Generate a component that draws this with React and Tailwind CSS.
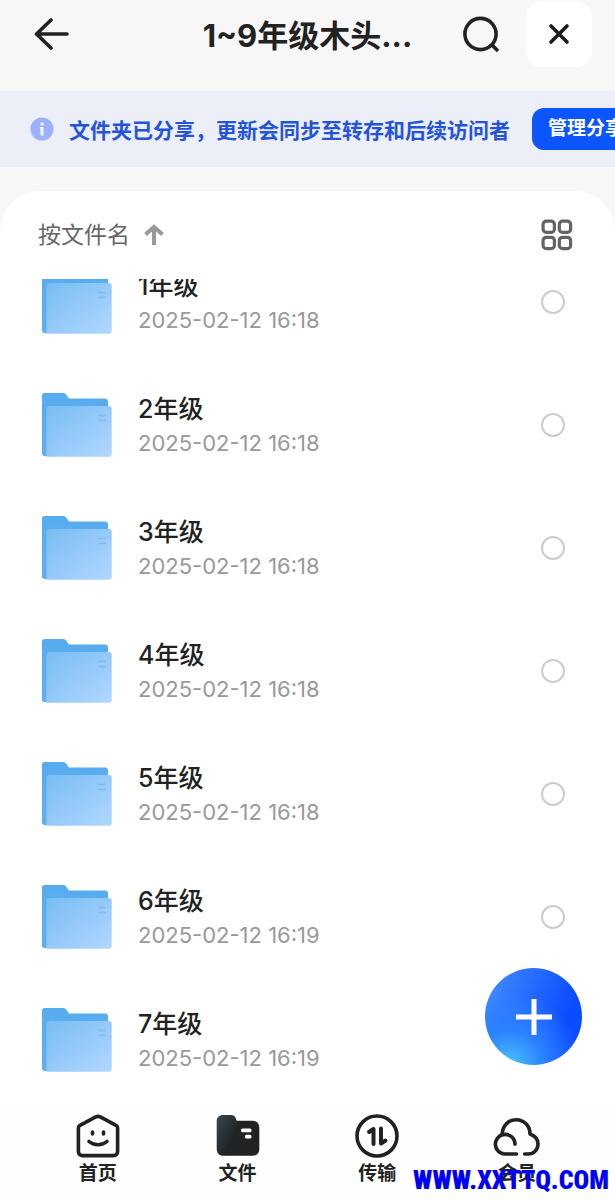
import { useState } from 'react'

const folders = [
  { name: '1年级', time: '2025-02-12 16:18' },
  { name: '2年级', time: '2025-02-12 16:18' },
  { name: '3年级', time: '2025-02-12 16:18' },
  { name: '4年级', time: '2025-02-12 16:18' },
  { name: '5年级', time: '2025-02-12 16:18' },
  { name: '6年级', time: '2025-02-12 16:19' },
  { name: '7年级', time: '2025-02-12 16:19' },
]

const tabs = [
  { label: '首页', Icon: HomeIcon },
  { label: '文件', Icon: FilesIcon },
  { label: '传输', Icon: TransferIcon },
  { label: '会员', Icon: CloudIcon },
]

function BackIcon() {
  return (
    <svg width="36" height="32" viewBox="0 0 36 32" fill="none" stroke="#222" strokeWidth="3.6" strokeLinecap="round" strokeLinejoin="round">
      <path d="M17 2 2.500 16 17 30M3 16h30" />
    </svg>
  )
}

function SearchIcon() {
  return (
    <svg width="38" height="38" viewBox="0 0 38 38" fill="none" stroke="#222" strokeWidth="3.6">
      <circle cx="18.500" cy="19" r="15.600" />
      <path d="m29.500 29.500 6.500 6.500" />
    </svg>
  )
}

function CloseIcon() {
  return (
    <svg width="22" height="22" viewBox="0 0 22 22" fill="none" stroke="#1c1c1c" strokeWidth="3.600" strokeLinecap="round">
      <path d="m3 3 16 16M19 3 3 19" />
    </svg>
  )
}

function InfoIcon() {
  return (
    <svg className="shrink-0" width="24" height="24" viewBox="0 0 24 24">
      <circle cx="12" cy="12" r="11.500" fill="#9bb1fb" />
      <circle cx="12" cy="7" r="1.700" fill="#f3f5ff" />
      <path d="M9.800 10h3.700v8.500h-3v-7h-.700Z" fill="#f3f5ff" />
    </svg>
  )
}

function SortUpIcon() {
  return (
    <svg width="20" height="22" viewBox="0 0 20 22" fill="none" stroke="#999" strokeWidth="4">
      <path d="M10 21V3M1.500 10.500 10 3l8.500 7.500" />
    </svg>
  )
}

function GridIcon() {
  return (
    <svg width="32" height="32" viewBox="0 0 32 32" fill="none" stroke="#636363" strokeWidth="3.200">
      <rect x="2.100" y="2.100" width="11.300" height="11.300" rx="3.200" />
      <rect x="18.300" y="2.100" width="11.300" height="11.300" rx="3.200" />
      <rect x="2.100" y="18.300" width="11.300" height="11.300" rx="3.200" />
      <rect x="18.300" y="18.300" width="11.300" height="11.300" rx="3.200" />
    </svg>
  )
}

function FolderIcon() {
  return (
    <svg className="shrink-0" width="70" height="65" viewBox="0 0 70 65">
      <defs>
        <linearGradient id="folder-front" x1="0" y1="0" x2="1" y2="1">
          <stop offset="0" stopColor="#78bdf2" />
          <stop offset="0.550" stopColor="#98cbfa" />
          <stop offset="1" stopColor="#b1d7fe" />
        </linearGradient>
        <linearGradient id="folder-back" x1="0" y1="0" x2="0" y2="1">
          <stop offset="0" stopColor="#56acf0" />
          <stop offset="1" stopColor="#61b0ec" />
        </linearGradient>
      </defs>
      <path d="M2.500 1H21c1.600 0 2.500.5 3.300 1.700L27 6.500h36c2 0 3 1 3 3V64H2.500C1 64 0 63 0 61.500v-58C0 2 1 1 2.500 1Z" fill="url(#folder-back)" />
      <path d="M7.500 14H67c1.700 0 2.700 1 2.700 2.700V62c0 1.700-1 2.700-2.700 2.700H4.500V17c0-2 1-3 3-3Z" fill="url(#folder-front)" />
      <path d="M56 23.500h8M56 28.500h8" stroke="#84baf0" strokeWidth="1.600" />
    </svg>
  )
}

function HomeIcon() {
  return (
    <svg width="44" height="44" viewBox="0 0 44 44" fill="none" stroke="#222" strokeWidth="3.600" strokeLinecap="round" strokeLinejoin="round">
      <path d="M19.700 2.900 4 11.300c-1 .6-1.600 1.500-1.600 2.700v23.500c0 2.400 1.700 4.100 4.100 4.100h31c2.400 0 4.100-1.700 4.100-4.100V14c0-1.200-.6-2.100-1.600-2.700L24.300 2.900c-1.600-.8-3-.8-4.600 0Z" />
      <path d="M16.500 18v2M27.500 18v2" />
      <path d="M13 27.500c5 4.300 13 4.300 18 0" />
    </svg>
  )
}

function FilesIcon() {
  return (
    <svg width="44" height="44" viewBox="0 0 44 44">
      <defs>
        <linearGradient id="tab-folder" x1="0" y1="0.200" x2="1" y2="0.700">
          <stop offset="0" stopColor="#37424a" />
          <stop offset="0.450" stopColor="#202325" />
          <stop offset="1" stopColor="#222" />
        </linearGradient>
      </defs>
      <path d="M7 1h8c2.500 0 3.800 1 4.700 3.300l1 2.500h16c4 0 6.600 2.700 6.600 6.600v21.500c0 4.200-2.600 6.800-6.800 6.800h-29C3.300 41.700.7 39.100.7 34.900V7.500C.7 3.500 3 1 7 1Z" fill="url(#tab-folder)" />
      <rect x="25" y="14.500" width="10.500" height="3.800" rx="1.500" fill="#fff" />
      <rect x="29" y="20.700" width="6.500" height="3.800" rx="1.500" fill="#fff" />
    </svg>
  )
}

function TransferIcon() {
  return (
    <svg width="44" height="44" viewBox="0 0 44 44" fill="none" stroke="#222" strokeWidth="3.600" strokeLinecap="round" strokeLinejoin="round">
      <circle cx="22" cy="22" r="20" />
      <path d="M18.500 30V15l-4.500 3M26 14.500v15l4.500-3" strokeWidth="4" />
    </svg>
  )
}

function CloudIcon() {
  return (
    <svg width="48" height="44" viewBox="0 0 48 44" fill="none" stroke="#222" strokeWidth="3.600" strokeLinecap="round" strokeLinejoin="round">
      <path d="M23.500 40H12a9.800 9.800 0 1 1 10-9.700" />
      <path d="M9.200 20.500C9.200 12 15.200 5.700 23.200 5.700S37 12 37 20c4.700 1.700 8 5.300 8 10 0 6-4.500 10-9.700 10h-3.600" />
    </svg>
  )
}

function FolderRow({ folder, checked, onToggle }) {
  const id = `folder-${folder.name}`
  return (
    <li className="flex h-[123px] items-center pr-[50px] pl-[42px]">
      <FolderIcon />
      <label htmlFor={id} className="ml-[26px] flex-1">
        <span className="block text-[25px] leading-9 font-medium text-[#222]">{folder.name}</span>
        <span className="block text-[22px] leading-8 text-[#999]">{folder.time}</span>
      </label>
      <input
        id={id}
        type="checkbox"
        checked={checked}
        onChange={onToggle}
        className="size-6 shrink-0 appearance-none rounded-full border-2 border-[#ccc] checked:border-[#0c55ff] checked:bg-[#0c55ff]"
      />
    </li>
  )
}

export default function App() {
  const [selected, setSelected] = useState([])
  const [activeTab, setActiveTab] = useState('文件')

  const toggle = (name) => {
    setSelected((prev) => (prev.includes(name) ? prev.filter((n) => n !== name) : [...prev, name]))
  }

  return (
    <div className="relative flex min-h-screen flex-col overflow-hidden bg-[#f7f7f7] font-['Inter','Noto_Sans_CJK_SC',sans-serif] text-[#222]">
      {/* Header */}
      <header className="grid grid-cols-[1fr_auto_1fr] items-center px-[23px] pt-px pb-6">
        <button type="button" aria-label="返回" className="justify-self-start pl-[11px]">
          <BackIcon />
        </button>
        <h1 className="pt-1 text-[31px] leading-10 font-bold">1~9年级木头...</h1>
        <div className="flex items-center gap-[26px] justify-self-end">
          <button type="button" aria-label="搜索">
            <SearchIcon />
          </button>
          <button type="button" aria-label="关闭" className="flex size-[66px] items-center justify-center rounded-2xl bg-white">
            <CloseIcon />
          </button>
        </div>
      </header>

      {/* Share notice, the button runs off the right edge */}
      <div className="flex h-[76px] items-center overflow-hidden bg-[#eceef8] pl-[30px] whitespace-nowrap">
        <InfoIcon />
        <p className="ml-[15px] shrink-0 pt-1 text-[21px] leading-8 font-bold text-[#2454dc]">文件夹已分享，更新会同步至转存和后续访问者</p>
        <button type="button" className="ml-[22px] h-[42px] shrink-0 rounded-xl bg-[#0c55ff] px-4 text-[19px] font-bold text-white">
          管理分享
        </button>
      </div>

      <main className="mt-6 flex-1 rounded-t-[40px] bg-white">
        <div className="flex h-[88px] items-center justify-between pr-[42px] pl-[38px]">
          <button type="button" className="flex items-center gap-[14px] text-[23px] text-[#666]">
            按文件名
            <SortUpIcon />
          </button>
          <button type="button" aria-label="网格视图">
            <GridIcon />
          </button>
        </div>
        <div className="overflow-hidden">
          <ul className="-mt-[39px]">
            {folders.map((folder) => (
              <FolderRow
                key={folder.name}
                folder={folder}
                checked={selected.includes(folder.name)}
                onToggle={() => toggle(folder.name)}
              />
            ))}
          </ul>
        </div>
      </main>

      {/* Bottom tabs */}
      <nav className="flex h-[98px] bg-[#fefefe] px-7">
        {tabs.map(({ label, Icon }) => (
          <button
            key={label}
            type="button"
            aria-current={activeTab === label ? 'page' : undefined}
            onClick={() => setActiveTab(label)}
            className="flex flex-1 flex-col items-center pt-3 text-[19px] leading-8 font-bold"
          >
            <Icon />
            {label}
          </button>
        ))}
      </nav>

      <button
        type="button"
        aria-label="添加"
        className="absolute right-[33px] bottom-[135px] flex size-[97px] items-center justify-center rounded-full bg-[radial-gradient(circle_at_25%_100%,#4bc4ff_0%,#2c82ff_28%,transparent_60%),linear-gradient(110deg,#3d87ff_10%,#0c4cff_75%)]"
      >
        <svg width="38" height="38" viewBox="0 0 38 38" stroke="#fff" strokeWidth="5">
          <path d="M19 1v36M1 19h36" />
        </svg>
      </button>

      <p className="absolute right-[6px] bottom-0 font-['Liberation_Sans_Narrow','Roboto_Condensed','Liberation_Sans',sans-serif] text-[26px] leading-10 font-black text-[#0000f5]">
        WWW.XXTTQ.COM
      </p>
    </div>
  )
}
